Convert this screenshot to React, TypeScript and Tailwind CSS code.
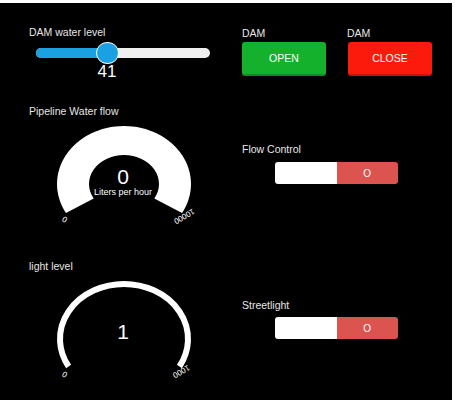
import React from 'react';

const FONT = { fontFamily: '"Liberation Sans", Arial, sans-serif' };

// point on an ellipse, angle in degrees (math orientation, y up)
function pt(cx: number, cy: number, rx: number, ry: number, deg: number) {
  const a = (deg * Math.PI) / 180;
  return [cx + rx * Math.cos(a), cy - ry * Math.sin(a)];
}

function arc(cx: number, cy: number, rx: number, ry: number) {
  const [x1, y1] = pt(cx, cy, rx, ry, 210);
  const [x2, y2] = pt(cx, cy, rx, ry, -30);
  return `M ${x1} ${y1} A ${rx} ${ry} 0 1 1 ${x2} ${y2}`;
}

function donut(cx: number, cy: number, ro: [number, number], ri: [number, number]) {
  const [ox1, oy1] = pt(cx, cy, ro[0], ro[1], 210);
  const [ox2, oy2] = pt(cx, cy, ro[0], ro[1], -30);
  const [ix1, iy1] = pt(cx, cy, ri[0], ri[1], 210);
  const [ix2, iy2] = pt(cx, cy, ri[0], ri[1], -30);
  return `M ${ox1} ${oy1} A ${ro[0]} ${ro[1]} 0 1 1 ${ox2} ${oy2} L ${ix2} ${iy2} A ${ri[0]} ${ri[1]} 0 1 0 ${ix1} ${iy1} Z`;
}

function Gauge({ kind, value, unit, max, maxX }: { kind: 'donut' | 'ring'; value: string; unit?: string; max: string; maxX: number }) {
  const cx = 124;
  const cy = 64;
  return (
    <svg width="229" height="112" className="block" style={FONT}>
      {kind === 'donut' ? (
        <path d={donut(cx, cy, [67, 58], [35, 29])} fill="#fff" />
      ) : (
        <path d={arc(cx, cy, 64, 55)} fill="none" stroke="#fff" strokeWidth="6" />
      )}
      <text x={cx - 1} y={cy - 6} fill="#fff" fontSize="21" textAnchor="middle" dominantBaseline="middle">
        {value}
      </text>
      {unit && (
        <text x={cx - 1} y={cy + 9} fill="#fff" fontSize="9" textAnchor="middle" dominantBaseline="middle">
          {unit}
        </text>
      )}
      <text x="65" y="99" fill="#fff" fontSize="8" textAnchor="middle" dominantBaseline="middle" transform="rotate(-150 65 99)">
        0
      </text>
      <text x={maxX} y="96" fill="#fff" fontSize="8" textAnchor="middle" dominantBaseline="middle" transform={`rotate(150 ${maxX} 96)`}>
        {max}
      </text>
    </svg>
  );
}

function Toggle() {
  return (
    <div className="ml-[46px] flex w-[123px] h-[22px] rounded-[3px] overflow-hidden">
      <div className="flex-1 bg-white" />
      <div className="flex-1 bg-[#db5450] flex items-center justify-center text-white text-[10px]">O</div>
    </div>
  );
}

export default function App() {
  return (
    <div className="w-[458px] h-[400px] bg-white pt-[3px]" style={FONT}>
      <div className="w-[452px] h-[397px] bg-black flex text-[#e6e6e6]">
        {/* left column: level slider and gauges */}
        <div className="w-[229px] flex flex-col">
          <div className="mt-[23px] pl-[29px] text-[10.5px] leading-[12px]">DAM water level</div>
          <div className="mt-[4px] ml-[36px] relative w-[174px] h-[22px] flex items-center">
            <div className="w-full h-[10px] rounded-full bg-[#efefef] overflow-hidden">
              <div className="w-[71px] h-full bg-[#1ba1e2]" />
            </div>
            <div className="absolute left-[60px] top-0 w-[23px] h-[22px] rounded-full bg-[#1ba1e2] border-[1.5px] border-white" />
          </div>
          <div className="ml-[87px] w-[40px] text-center text-white text-[17px] leading-[16px]">41</div>
          <div className="mt-[25px] pl-[29px] text-[10.5px] leading-[12px]">Pipeline Water flow</div>
          <div className="mt-[3px]">
            <Gauge kind="donut" value="0" unit="Liters per hour" max="10000" maxX={184} />
          </div>
          <div className="mt-[28px] pl-[29px] text-[10.5px] leading-[12px]">light level</div>
          <div className="mt-[3px]">
            <Gauge kind="ring" value="1" max="1000" maxX={181} />
          </div>
        </div>

        {/* right column: dam buttons and switches */}
        <div className="flex-1 flex flex-col">
          <div className="mt-[24px] flex text-[10.5px] leading-[12px]">
            <div className="pl-[13px] w-[118px]">DAM</div>
            <div>DAM</div>
          </div>
          <div className="mt-[3px] ml-[13px] flex gap-[22px]">
            <button className="w-[84px] h-[34px] rounded-[3px] bg-[#13b12c] text-white text-[10.5px] shadow-[inset_0_-2px_0_rgba(0,0,0,0.2)]">
              OPEN
            </button>
            <button className="w-[84px] h-[34px] rounded-[3px] bg-[#fc1a0c] text-white text-[10.5px] shadow-[inset_0_-2px_0_rgba(0,0,0,0.2)]">
              CLOSE
            </button>
          </div>
          <div className="mt-[67px] pl-[13px] text-[10.5px] leading-[12px]">Flow Control</div>
          <div className="mt-[7px]">
            <Toggle />
          </div>
          <div className="mt-[115px] pl-[13px] text-[10.5px] leading-[12px]">Streetlight</div>
          <div className="mt-[6px]">
            <Toggle />
          </div>
        </div>
      </div>
    </div>
  );
}
